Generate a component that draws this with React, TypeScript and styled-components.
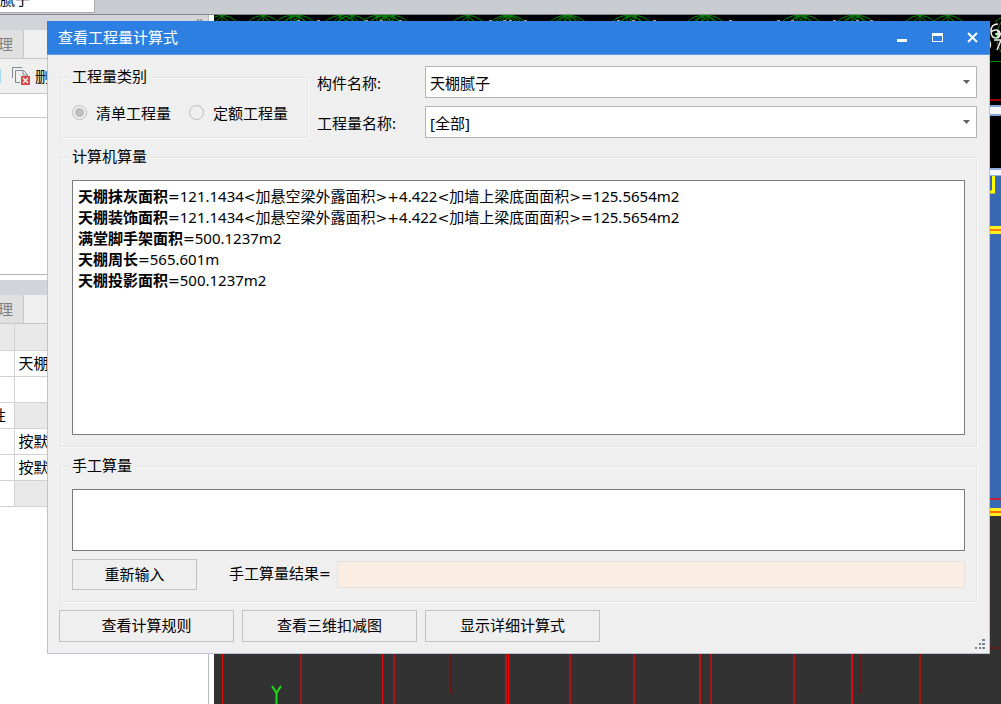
import React from 'react';
import styled, { createGlobalStyle } from 'styled-components';

const GlobalStyle = createGlobalStyle`
  * { box-sizing: border-box; }
  body {
    margin: 0;
    color: #000;
    font: 15px/22px "Noto Sans", "Noto Sans CJK SC", sans-serif;
  }
  button, input, select, textarea { font: inherit; color: inherit; }
`;

/* ---------- application behind the dialog ---------- */

const Desktop = styled.div`
  position: relative;
  display: flex;
  flex-direction: column;
  height: 100vh;
  min-height: 660px;
  overflow: hidden;
  background: #fff;
`;

const TopBar = styled.header`
  flex: none;
  height: 15px;
  background: #c9ccd1;
  border-bottom: 1px solid #84888c;
`;

const ComponentPicker = styled.div`
  display: flex;
  align-items: flex-end;
  justify-content: space-between;
  width: 95px;
  height: 13px;
  padding-right: 8px;
  overflow: hidden;
  background: #fff;
  border-right: 1px solid #a9acb0;
  border-bottom: 1px solid #a9acb0;
`;

const PickerText = styled.span`
  display: flex;
  justify-content: flex-end;
  width: 30px;
  line-height: 26px;
  white-space: nowrap;
`;

const Workspace = styled.div`
  flex: 1;
  display: flex;
  min-height: 0;
`;

const SidePanel = styled.aside`
  flex: none;
  width: 209px;
  margin-right: 5px;
  border-right: 1px solid #b9bbbf;
  background: #fff;
`;

const PanelHeader = styled.div`
  height: 15px;
  padding-right: 4px;
  background: #d2d4d9;
  color: #777;
  line-height: 10px;
  text-align: right;
`;

const TabStrip = styled.div`
  display: flex;
  height: 29px;
  background: #efefef;
  border-bottom: 1px solid #c8c8c8;
`;

const Tab = styled.button`
  display: flex;
  justify-content: flex-end;
  align-items: center;
  width: 24px;
  padding: 0 10px 0 0;
  border: 0;
  border-right: 1px solid #c8c8c8;
  background: #e0e0e0;
  color: #808080;
  white-space: nowrap;
`;

const ToolRow = styled.div`
  display: flex;
  align-items: center;
  gap: 6px;
  height: 35px;
  background: #efefef;
  border-bottom: 1px solid #c8c8c8;
`;

const ToolEdge = styled.span`
  width: 1px;
  height: 14px;
  background: #a6dcf0;
`;

const ToolButton = styled.button`
  display: flex;
  align-items: center;
  gap: 5px;
  padding: 0 5px;
  border: 0;
  background: none;
`;

const SearchBox = styled.input`
  display: block;
  width: 100%;
  height: 24px;
  border: 0;
  border-bottom: 1px solid #c8c8c8;
`;

const ComponentList = styled.div`
  height: 157px;
  margin-bottom: 5px;
  border-bottom: 1px solid #b4b4b4;
`;

const PropertyTable = styled.table`
  width: 100%;
  table-layout: fixed;
  border-collapse: collapse;
`;

const PropertyCell = styled.td<{ $name?: boolean; $grey?: boolean }>`
  width: ${(p) => (p.$name ? '14px' : 'auto')};
  height: 26px;
  padding: ${(p) => (p.$name ? '0' : '0 4px')};
  overflow: hidden;
  border-right: 1px solid #d2d2d2;
  border-bottom: 1px solid #d2d2d2;
  background: ${(p) => (p.$grey ? '#e9e9e9' : '#fff')};
  line-height: 22px;
  white-space: nowrap;
`;

const NameText = styled.span`
  display: flex;
  justify-content: flex-end;
  width: 6px;
`;

const Canvas = styled.main`
  flex: 1;
  min-width: 0;
  background: #323232;
  svg { display: block; width: 100%; height: 100%; }
`;

/* ---------- dialog ---------- */

const Dialog = styled.section`
  position: absolute;
  top: 21px;
  left: 47px;
  right: 11px;
  background: #efefef;
  border: 1px solid #b8c4d4;
  border-top: 0;
`;

const TitleBar = styled.header`
  display: flex;
  align-items: stretch;
  height: 34px;
  margin: 0 -1px;
  padding-left: 11px;
  background: #2d80e2;
  border-bottom: 1px solid #5b9ce8;
  color: #fff;
`;

const Title = styled.h1`
  flex: 1;
  margin: 0;
  font-size: 15px;
  font-weight: 400;
  line-height: 32px;
`;

const WindowButton = styled.button`
  display: flex;
  align-items: center;
  justify-content: center;
  width: 35px;
  padding: 0;
  border: 0;
  background: none;
`;

const DialogBody = styled.div`
  display: flex;
  flex-direction: column;
  gap: 8px;
  padding: 11px 12px;
`;

const TopRow = styled.div`
  display: flex;
  gap: 9px;
`;

const Group = styled.fieldset<{ $narrow?: boolean }>`
  width: ${(p) => (p.$narrow ? '248px' : 'auto')};
  min-width: 0;
  margin: 0;
  padding: ${(p) => (p.$narrow ? '0 11px' : '12px 11px 11px')};
  border: 1px solid #e3e3e3;
  box-shadow: 1px 1px 0 #fbfbfb, inset 1px 1px 0 #fbfbfb;
`;

const Legend = styled.legend`
  margin-left: -3px;
  padding: 0 3px 2px;
  background: #efefef;
  line-height: 20px;
`;

const RadioRow = styled.div`
  display: flex;
  align-items: center;
  gap: 18px;
  height: 49px;
`;

const RadioLabel = styled.label`
  display: flex;
  align-items: center;
  gap: 9px;
`;

const Radio = styled.input`
  appearance: none;
  width: 15px;
  height: 15px;
  margin: 0;
  border: 1px solid #bcbcbc;
  border-radius: 50%;
  background: #efefef;
  &:checked { background: radial-gradient(circle, #bdbdbd 4px, #efefef 5px); }
`;

const Fields = styled.div`
  flex: 1;
  display: grid;
  grid-template-columns: 100px 1fr;
  align-items: center;
  gap: 8px;
`;

const FieldLabel = styled.label`
  padding-top: 2px;
`;

const SelectFrame = styled.div`
  display: grid;
  grid-template-columns: 1fr 20px;
  align-items: center;
  height: 32px;
  border: 1px solid #b4b4b4;
  background: #fff;
  svg {
    grid-area: 1 / 2;
    justify-self: center;
    pointer-events: none;
    z-index: 1;
  }
`;

const Select = styled.select`
  grid-area: 1 / 1 / 2 / 3;
  appearance: none;
  width: 100%;
  height: 30px;
  padding: 2px 20px 0 4px;
  border: 0;
  background: #fff;
`;

const Formulas = styled.output`
  display: block;
  height: 255px;
  padding: 5px;
  overflow: auto;
  border: 1px solid #7c7c7c;
  background: #fff;
  line-height: 21px;
`;

const FormulaLine = styled.div`
  height: 21px;
  white-space: nowrap;
`;

const Sign = styled.span`
  font-family: "DejaVu Sans", sans-serif;
  font-size: 14px;
`;

const ManualInput = styled.textarea`
  display: block;
  width: 100%;
  height: 62px;
  margin-bottom: 8px;
  padding: 6px;
  border: 1px solid #7c7c7c;
  border-radius: 0;
  background: #fff;
  resize: none;
`;

const ManualRow = styled.div`
  display: flex;
  align-items: center;
`;

const ResultLabel = styled.label`
  margin: 0 6px 0 32px;
  padding-bottom: 2px;
  white-space: nowrap;
`;

const ResultField = styled.input`
  flex: 1;
  min-width: 0;
  height: 27px;
  border: 1px solid #e2e2e2;
  background: #faeee4;
`;

const PushButton = styled.button<{ $wide?: boolean }>`
  width: ${(p) => (p.$wide ? '175px' : '125px')};
  height: ${(p) => (p.$wide ? '32px' : '31px')};
  padding: 0 0 2px;
  border: 1px solid #c2c2c2;
  background: #efefef;
`;

const ButtonRow = styled.footer`
  display: flex;
  gap: 8px;
  margin-left: -1px;
`;

const Grip = styled.svg`
  position: absolute;
  right: 4px;
  bottom: 4px;
`;

/* ---------- drawings ---------- */

const hubs = [222, 263, 291, 299, 340, 352, 377, 385, 393, 468, 506, 510, 565, 570, 627, 635, 702, 708, 797, 805, 852, 858, 920, 948, 1010];
const marks = [297, 317, 365, 380, 399, 489, 503, 509, 524, 617, 632, 653, 729, 777, 791, 833, 856, 870];
const axes: [number, number, string, number][] = [
  [222, 1, '#e01010', 704], [300, 2, '#a01818', 704], [382, 1, '#e01010', 704],
  [393, 2, '#a01818', 704], [450, 2, '#681616', 694], [505, 2, '#b01616', 704],
  [508, 1, '#ff0000', 704], [569, 2, '#a01818', 704], [633, 2, '#a01818', 704],
  [699, 2, '#c01414', 704], [710, 2, '#a01818', 704], [793, 2, '#a01818', 704],
  [851, 2, '#d01010', 704], [859, 2, '#681616', 694], [919, 2, '#a01818', 704],
];

const Drawing = () => (
  <svg viewBox="214 15 787 689" preserveAspectRatio="xMinYMin slice" aria-hidden="true">
    <rect x="214" y="15" width="787" height="160" fill="#000" />
    <g fill="none" stroke="#008a00">
      {hubs.map((x) => (
        <path key={x} d={`M${x - 15} 22 Q${x - 8} 15.5 ${x} 15.5 Q${x + 8} 15.5 ${x + 15} 22 M${x} 15V22 M${x} 16l-7 6M${x} 16l7 6`} />
      ))}
      <path d="M989 61.5H1001M1001 22Q992 37 1001 52" />
    </g>
    {marks.map((x) => <rect key={x} x={x} y="20" width="3" height="1" fill="#a898a0" />)}
    <g fill="none" stroke="#eee" strokeWidth="1.5">
      <path d="M998 24Q991 24 991 31Q991 38 996 38Q1000 38 1000 34Q1000 30 996 30Q992 30 991 33M995 34H1001M998 31V38M989 40Q992 45 989 49M994 40H1001L997 50" />
    </g>
    <rect x="989" y="99" width="12" height="2" fill="#900" />
    <rect x="989" y="105" width="12" height="11" fill="#7fa5dc" />
    <rect x="989" y="107" width="12" height="7" fill="#f5f7fc" />
    <rect x="989" y="168" width="12" height="8" fill="#8fb0e0" />
    <rect x="989" y="170" width="12" height="5" fill="#f5f7fc" />
    <rect x="989" y="176" width="12" height="333" fill="#3a69b3" />
    <path d="M989 192H993.5V176" fill="none" stroke="#ff0" strokeWidth="3" />
    <rect x="989" y="226" width="12" height="8" fill="#ffee20" />
    <rect x="989" y="229" width="12" height="2" fill="#ff7a00" />
    <rect x="989" y="498" width="12" height="2" fill="#c5203c" />
    <rect x="989" y="508" width="12" height="8" fill="#ffee20" />
    <rect x="989" y="511" width="12" height="2" fill="#ff6a00" />
    <rect x="989" y="647" width="12" height="2" fill="#601818" />
    {axes.map(([x, w, c, end]) => <rect key={x} x={x} y="640" width={w} height={end - 640} fill={c} />)}
    <path d="M272 686L276.5 693L281 686M276.5 693V704" fill="none" stroke="#18e018" strokeWidth="2" />
  </svg>
);

const DeleteIcon = () => (
  <svg width="18" height="18" viewBox="0 0 18 18" fill="none" aria-hidden="true">
    <path d="M0.5 11V0.5H10" stroke="#7f8b94" />
    <path d="M8 15.5H3.5V3.5H11.5L15.5 7.5V9M11 3.5V8H15.5" stroke="#7f8b94" />
    <rect x="9" y="9" width="9" height="9" fill="#d9484d" />
    <path d="M11 11L16 16M16 11L11 16" stroke="#fff" strokeWidth="1.2" />
  </svg>
);

const DownArrow = () => (
  <svg width="7" height="4" viewBox="0 0 7 4" aria-hidden="true">
    <path d="M0 0H7L3.5 4Z" fill="#606060" />
  </svg>
);

/* ---------- data ---------- */

const formulas: [string, string][] = [
  ['天棚抹灰面积', '=121.1434<加悬空梁外露面积>+4.422<加墙上梁底面面积>=125.5654m2'],
  ['天棚装饰面积', '=121.1434<加悬空梁外露面积>+4.422<加墙上梁底面面积>=125.5654m2'],
  ['满堂脚手架面积', '=500.1237m2'],
  ['天棚周长', '=565.601m'],
  ['天棚投影面积', '=500.1237m2'],
];

const properties = [
  { name: '', value: '', grey: true, nameGrey: true },
  { name: '', value: '天棚腻子' },
  { name: '', value: '' },
  { name: '属性', value: '', grey: true },
  { name: '', value: '按默认' },
  { name: '', value: '按默认' },
  { name: '', value: '', grey: true },
];

const Expression = ({ text }: { text: string }) => (
  <>
    {text.split(/([=<>+])/).map((part, i) => (i % 2 ? <Sign key={i}>{part}</Sign> : part))}
  </>
);

export default function App() {
  return (
    <>
      <GlobalStyle />
      <Desktop>
        <TopBar>
          <ComponentPicker>
            <PickerText>天棚腻子</PickerText>
          </ComponentPicker>
        </TopBar>
        <Workspace>
          <SidePanel>
            <PanelHeader>»</PanelHeader>
            <TabStrip><Tab type="button">管理</Tab></TabStrip>
            <ToolRow>
              <ToolEdge />
              <ToolButton type="button"><DeleteIcon />删除</ToolButton>
            </ToolRow>
            <SearchBox aria-label="搜索" />
            <ComponentList />
            <PanelHeader />
            <TabStrip><Tab type="button">管理</Tab></TabStrip>
            <PropertyTable>
              <tbody>
                {properties.map((row, i) => (
                  <tr key={i}>
                    <PropertyCell $name $grey={row.nameGrey}><NameText>{row.name}</NameText></PropertyCell>
                    <PropertyCell $grey={row.grey}>{row.value}</PropertyCell>
                  </tr>
                ))}
              </tbody>
            </PropertyTable>
          </SidePanel>
          <Canvas><Drawing /></Canvas>
        </Workspace>

        <Dialog role="dialog" aria-labelledby="dialog-title">
          <TitleBar>
            <Title id="dialog-title">查看工程量计算式</Title>
            <WindowButton type="button" aria-label="最小化">
              <svg width="11" height="11" viewBox="0 0 11 11"><rect y="7" width="10" height="3" fill="#fff" /></svg>
            </WindowButton>
            <WindowButton type="button" aria-label="最大化">
              <svg width="11" height="11" viewBox="0 0 11 11"><path d="M0 1H11V10H0ZM1 4V9H10V4Z" fill="#fff" fillRule="evenodd" /></svg>
            </WindowButton>
            <WindowButton type="button" aria-label="关闭">
              <svg width="11" height="11" viewBox="0 0 11 11"><path d="M1 1L10 10M10 1L1 10" stroke="#fff" strokeWidth="2" /></svg>
            </WindowButton>
          </TitleBar>
          <DialogBody>
            <TopRow>
              <Group $narrow>
                <Legend>工程量类别</Legend>
                <RadioRow>
                  <RadioLabel><Radio type="radio" name="kind" defaultChecked disabled />清单工程量</RadioLabel>
                  <RadioLabel><Radio type="radio" name="kind" disabled />定额工程量</RadioLabel>
                </RadioRow>
              </Group>
              <Fields>
                <FieldLabel htmlFor="component">构件名称:</FieldLabel>
                <SelectFrame>
                  <Select id="component"><option>天棚腻子</option></Select>
                  <DownArrow />
                </SelectFrame>
                <FieldLabel htmlFor="quantity">工程量名称:</FieldLabel>
                <SelectFrame>
                  <Select id="quantity"><option>[全部]</option></Select>
                  <DownArrow />
                </SelectFrame>
              </Fields>
            </TopRow>
            <Group>
              <Legend>计算机算量</Legend>
              <Formulas>
                {formulas.map(([name, text]) => (
                  <FormulaLine key={name}><b>{name}</b><Expression text={text} /></FormulaLine>
                ))}
              </Formulas>
            </Group>
            <Group>
              <Legend>手工算量</Legend>
              <ManualInput aria-label="手工算量" />
              <ManualRow>
                <PushButton type="button">重新输入</PushButton>
                <ResultLabel htmlFor="result">手工算量结果<Sign>=</Sign></ResultLabel>
                <ResultField id="result" readOnly />
              </ManualRow>
            </Group>
            <ButtonRow>
              <PushButton type="button" $wide>查看计算规则</PushButton>
              <PushButton type="button" $wide>查看三维扣减图</PushButton>
              <PushButton type="button" $wide>显示详细计算式</PushButton>
            </ButtonRow>
          </DialogBody>
          <Grip width="10" height="10" viewBox="0 0 10 10" fill="#7c8494" aria-hidden="true">
            <path d="M7 0h3v2H7zM4 4h2v2H4zM7 4h3v2H7zM0 8h2v2H0zM4 8h2v2H4zM7 8h3v2H7z" />
          </Grip>
        </Dialog>
      </Desktop>
    </>
  );
}
